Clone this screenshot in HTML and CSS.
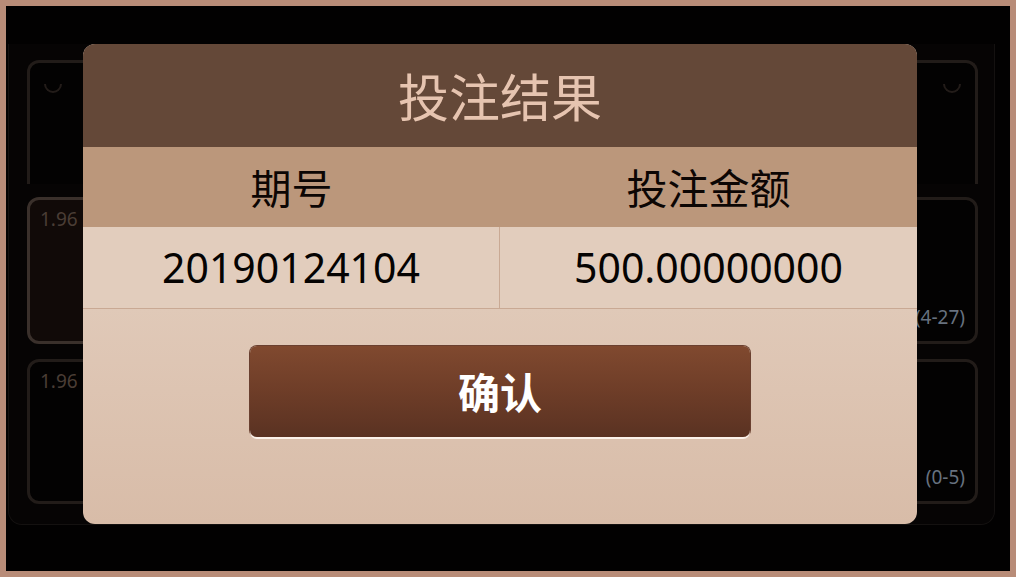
FILE: index.html
```html
<!DOCTYPE html>
<html lang="zh">
<head>
<meta charset="utf-8">
<title>投注结果</title>
<link rel="stylesheet" href="styles.css">
</head>
<body>
<div class="frame">
  <div class="panel">
    <div class="card card-top">
      <span class="hook hook-left"></span>
      <span class="hook hook-right"></span>
    </div>
    <div class="grid">
      <div class="card odds-card odds-hl"><span class="odds">1.96</span></div>
      <div class="card odds-card"></div>
      <div class="card odds-card"><span class="range">(4-27)</span></div>
      <div class="card odds-card"><span class="odds">1.96</span></div>
      <div class="card odds-card"></div>
      <div class="card odds-card"><span class="range">(0-5)</span></div>
    </div>
  </div>

  <div class="modal">
    <div class="modal-head">投注结果</div>
    <div class="table">
      <div class="th">期号</div>
      <div class="th">投注金额</div>
      <div class="td td-first">20190124104</div>
      <div class="td">500.00000000</div>
    </div>
    <div class="modal-foot">
      <button class="btn">确认</button>
    </div>
  </div>
</div>
</body>
</html>
```
FILE: styles.css
```css
html, body {
  margin: 0;
  padding: 0;
  width: 1016px;
  height: 577px;
  overflow: hidden;
  background: #b88c78;
}

.frame {
  position: relative;
  box-sizing: border-box;
  width: 1016px;
  height: 577px;
  border: 6px solid #b88c78;
  background: #020101;
  overflow: hidden;
  font-family: "Noto Sans", "Noto Sans CJK SC", sans-serif;
}

/* background page */
.panel {
  box-sizing: border-box;
  margin: 38px 15px 0 2px;
  height: 481px;
  padding: 16px 16px 20px 18px;
  background: #060404;
  border: 1px solid #141110;
  border-top: none;
  border-radius: 0 0 14px 14px;
  display: flex;
  flex-direction: column;
  gap: 13px;
}

.card {
  box-sizing: border-box;
  border: 3px solid #221c19;
  border-radius: 12px;
  background: #030202;
}

.card-top {
  position: relative;
  height: 126px;
  border-bottom: none;
  border-radius: 12px 12px 0 0;
}

.hook {
  position: absolute;
  top: 12px;
  width: 14px;
  height: 14px;
  border: 2px solid #231c19;
  border-top-color: transparent;
  border-left-color: transparent;
  border-radius: 50%;
  transform: rotate(45deg);
}
.hook-left { left: 14px; }
.hook-right { right: 14px; }

.grid {
  flex: 1;
  display: grid;
  grid-template-columns: repeat(3, 1fr);
  grid-template-rows: 147px 145px;
  gap: 15px 12px;
}

.odds-card {
  display: flex;
  flex-direction: column;
  justify-content: space-between;
  padding: 8px 10px 12px 10px;
  font-size: 19px;
  line-height: 1.2;
}

.odds-hl {
  border-color: #3a302b;
  background: #110a08;
}

.odds {
  align-self: flex-start;
  color: #4a3d35;
}

.range {
  margin-top: auto;
  align-self: flex-end;
  color: #67717f;
}

/* modal */
.modal {
  position: absolute;
  left: 77px;
  top: 38px;
  width: 834px;
  height: 480px;
  border-radius: 12px;
  overflow: hidden;
  background: linear-gradient(180deg, #e4d0c0 0%, #e0c9b8 55%, #d8bca8 100%);
  display: flex;
  flex-direction: column;
}

.modal-head {
  height: 103px;
  background: #644838;
  color: #e6c4b0;
  font-family: "Noto Sans CJK SC", sans-serif;
  font-size: 51px;
  line-height: 1.2;
  display: flex;
  align-items: center;
  justify-content: center;
}

.table {
  display: grid;
  grid-template-columns: 1fr 1fr;
  grid-template-rows: 80px 82px;
}

.th {
  background: #bb977b;
  color: #0c0604;
  font-family: "Noto Sans CJK SC", sans-serif;
  font-size: 41px;
  line-height: 1.2;
  display: flex;
  align-items: center;
  justify-content: center;
}

.td {
  background: #e2cdbd;
  color: #050302;
  font-size: 41px;
  line-height: 1.2;
  display: flex;
  align-items: center;
  justify-content: center;
  border-bottom: 1px solid #c9a994;
}

.td-first {
  border-right: 1px solid #c9a994;
}

.modal-foot {
  display: flex;
  justify-content: center;
  padding-top: 37px;
}

.btn {
  width: 500px;
  height: 91px;
  border: none;
  border-radius: 7px;
  background: linear-gradient(180deg, #80492f 0%, #6e3d28 50%, #5a3222 100%);
  box-shadow: 0 2px 0 #fbf1ea, 0 0 0 1px #6a4030;
  color: #ffffff;
  font-family: "Noto Sans CJK SC", sans-serif;
  font-weight: 700;
  font-size: 42px;
  line-height: 1.2;
  padding: 0;
  cursor: pointer;
}
```
